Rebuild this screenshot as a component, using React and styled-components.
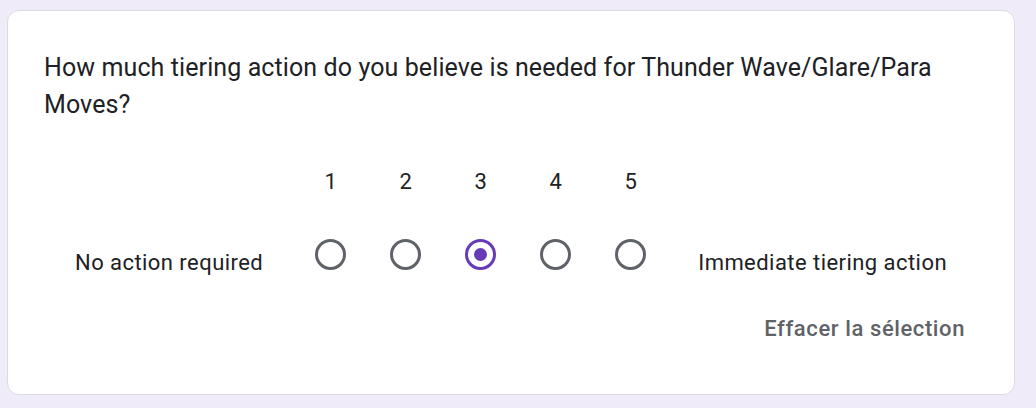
import React, { useState } from "react";
import styled, { createGlobalStyle } from "styled-components";

const Global = createGlobalStyle`
  html, body { margin: 0; padding: 0; background: #f0ebf8; }
  body { font-family: Roboto, "Noto Sans", Arial, sans-serif; }
  * { box-sizing: border-box; }
`;

const Page = styled.div`
  padding: 10px 21px 13px 7px;
`;

const Card = styled.div`
  background: #fff;
  border: 1px solid #dadce0;
  border-radius: 12px;
  height: 385px;
  padding: 38px 36px 0 36px;
  display: flex;
  flex-direction: column;
`;

const Question = styled.div`
  font-size: 25px;
  line-height: 37px;
  color: #202124;
  letter-spacing: 0.1px;
`;

const Scale = styled.div`
  margin-top: 41px;
  display: flex;
  justify-content: center;
  align-items: flex-end;
`;

const EndLabel = styled.div`
  font-size: 22px;
  line-height: 30px;
  letter-spacing: 0.45px;
  color: #202124;
  padding: 0 30px;
  margin-bottom: 12px;
  white-space: nowrap;
`;

const Option = styled.label`
  width: 75px;
  display: flex;
  flex-direction: column;
  align-items: center;
  cursor: pointer;
`;

const Digit = styled.div`
  font-size: 22px;
  line-height: 36px;
  height: 36px;
  color: #202124;
  margin-bottom: 18px;
`;

const RadioCell = styled.div`
  height: 72px;
  display: flex;
  align-items: center;
  justify-content: center;
`;

const Radio = styled.div`
  width: 31px;
  height: 31px;
  border-radius: 50%;
  border: 3px solid ${(p) => (p.$checked ? "#673ab7" : "#5f6368")};
  display: flex;
  align-items: center;
  justify-content: center;
`;

const Dot = styled.div`
  width: 13px;
  height: 13px;
  border-radius: 50%;
  background: #673ab7;
`;

const Footer = styled.div`
  display: flex;
  justify-content: flex-end;
  margin-top: 21px;
`;

const ClearButton = styled.button`
  border: none;
  background: transparent;
  font-family: inherit;
  font-size: 22px;
  font-weight: 500;
  letter-spacing: 0.6px;
  line-height: 36px;
  height: 36px;
  color: #5f6368;
  padding: 0 13px;
  cursor: pointer;
`;

export default function App() {
  const [value, setValue] = useState(3);
  return (
    <>
      <Global />
      <Page>
        <Card>
          <Question>
            How much tiering action do you believe is needed for Thunder Wave/Glare/Para Moves?
          </Question>
          <Scale>
            <EndLabel>No action required</EndLabel>
            {[1, 2, 3, 4, 5].map((n) => (
              <Option key={n} onClick={() => setValue(n)}>
                <Digit>{n}</Digit>
                <RadioCell>
                  <Radio $checked={value === n}>{value === n && <Dot />}</Radio>
                </RadioCell>
              </Option>
            ))}
            <EndLabel>Immediate tiering action</EndLabel>
          </Scale>
          <Footer>
            <ClearButton onClick={() => setValue(null)}>Effacer la sélection</ClearButton>
          </Footer>
        </Card>
      </Page>
    </>
  );
}
